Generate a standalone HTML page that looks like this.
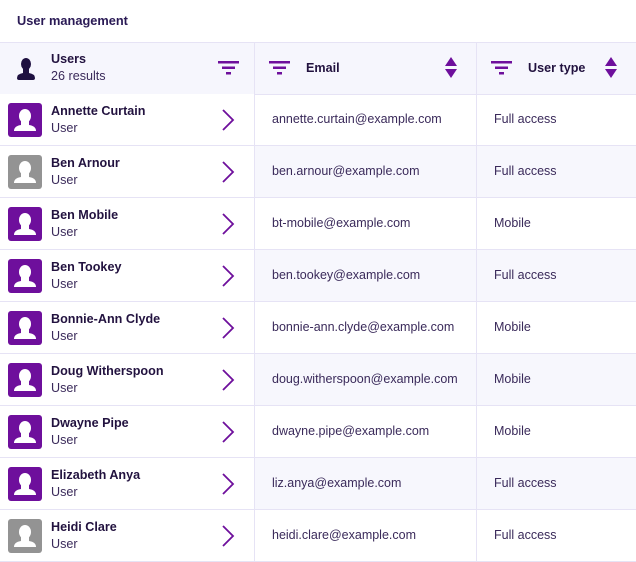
<!DOCTYPE html>
<html><head><style>
body{margin:0;width:636px;height:560px;overflow:hidden;background:#fff;font-family:"Liberation Sans",sans-serif;color:#2a1a4a}
.title{position:absolute;left:17px;top:13px;font-size:12.8px;font-weight:bold;color:#2a1a55}
.row{position:absolute;left:0;width:636px;height:51px;border-bottom:1px solid #e6e3f5}
.c1{position:absolute;left:0;top:0;width:254px;height:51px;background:#fff;border-right:1px solid #e6e3f5}
.rest{position:absolute;left:255px;top:0;width:381px;height:51px}
.alt .rest{background:#f7f7fd}
.c3b{position:absolute;left:476px;top:0;width:1px;height:51px;background:#e6e3f5}
.av{position:absolute;left:8px;top:9px;width:34px;height:34px;border-radius:3px;background:#6e0f9c}
.av.g{background:#939393}
.nm{position:absolute;left:51px;top:10px;font-size:12.6px;font-weight:bold;color:#22123f}
.sb{position:absolute;left:51px;top:27px;font-size:12.6px;color:#3a2a5a}
.chev{position:absolute;left:221px;top:15px}
.em{position:absolute;left:272px;top:18px;font-size:12.5px;color:#3a2a5a}
.ty{position:absolute;left:494px;top:18px;font-size:12.5px;color:#3a2a5a}
.hdr{position:absolute;left:0;top:42px;width:636px;height:51px;background:#f6f6fd;border-top:1px solid #e6e3f5;border-bottom:1px solid #e6e3f5}
</style></head><body>
<div class="title">User management</div>
<div class="hdr">
 <svg style="position:absolute;left:14px;top:14px" width="24" height="24" viewBox="0 0 24 24"><ellipse cx="12" cy="7" rx="5" ry="6" fill="#1e1040"/><path d="M9 11 L15 11 L15 16 Q21 17 21 21 Q21 23 19 23 L5 23 Q3 23 3 21 Q3 17 9 16Z" fill="#1e1040"/></svg>
 <div style="position:absolute;left:51px;top:9px;font-size:12.6px;font-weight:bold;color:#22123f">Users</div>
 <div style="position:absolute;left:51px;top:26px;font-size:12.6px;color:#3a2a5a">26 results</div>
 <svg style="position:absolute;left:218px;top:18px" width="22" height="14"><rect x="0" y="0" width="21" height="2.5" fill="#6e0f9c"/><rect x="4" y="5.5" width="13" height="2.5" fill="#6e0f9c"/><rect x="8" y="11" width="5" height="2.5" fill="#6e0f9c"/></svg>
 <div style="position:absolute;left:254px;top:0;width:1px;height:51px;background:#e6e3f5"></div>
 <svg style="position:absolute;left:269px;top:18px" width="22" height="14"><rect x="0" y="0" width="21" height="2.5" fill="#6e0f9c"/><rect x="4" y="5.5" width="13" height="2.5" fill="#6e0f9c"/><rect x="8" y="11" width="5" height="2.5" fill="#6e0f9c"/></svg>
 <div style="position:absolute;left:306px;top:18px;font-size:12.6px;font-weight:bold;color:#22123f">Email</div>
 <svg style="position:absolute;left:444px;top:14px" width="14" height="22"><path d="M7 0 L13 9 L1 9Z M1 12 L13 12 L7 21Z" fill="#6e0f9c"/></svg>
 <div style="position:absolute;left:476px;top:0;width:1px;height:51px;background:#e6e3f5"></div>
 <svg style="position:absolute;left:491px;top:18px" width="22" height="14"><rect x="0" y="0" width="21" height="2.5" fill="#6e0f9c"/><rect x="4" y="5.5" width="13" height="2.5" fill="#6e0f9c"/><rect x="8" y="11" width="5" height="2.5" fill="#6e0f9c"/></svg>
 <div style="position:absolute;left:528px;top:18px;font-size:12.6px;font-weight:bold;color:#22123f">User type</div>
 <svg style="position:absolute;left:604px;top:14px" width="14" height="22"><path d="M7 0 L13 9 L1 9Z M1 12 L13 12 L7 21Z" fill="#6e0f9c"/></svg>
</div>
<div id="rows"></div>
<script>
var d=[["Annette Curtain","annette.curtain@example.com","Full access",0],["Ben Arnour","ben.arnour@example.com","Full access",1],["Ben Mobile","bt-mobile@example.com","Mobile",0],["Ben Tookey","ben.tookey@example.com","Full access",0],["Bonnie-Ann Clyde","bonnie-ann.clyde@example.com","Mobile",0],["Doug Witherspoon","doug.witherspoon@example.com","Mobile",0],["Dwayne Pipe","dwayne.pipe@example.com","Mobile",0],["Elizabeth Anya","liz.anya@example.com","Full access",0],["Heidi Clare","heidi.clare@example.com","Full access",1]];
var h="";
d.forEach(function(r,i){
h+='<div class="row'+(i%2?' alt':'')+'" style="top:'+(94+i*52)+'px"><div class="rest"></div><div class="c3b"></div><div class="c1"><div class="av'+(r[3]?' g':'')+'"><svg width="34" height="34" viewBox="0 0 34 34"><ellipse cx="17" cy="13" rx="6" ry="7" fill="#fff"/><path d="M13 18 L21 18 L21 22 Q28 23 28 28 L6 28 Q6 23 13 22Z" fill="#fff"/></svg></div><div class="nm">'+r[0]+'</div><div class="sb">User</div><svg class="chev" width="14" height="22"><path d="M2 1 L12 11 L2 21" stroke="#6e0f9c" stroke-width="1.8" fill="none"/></svg></div><div class="em">'+r[1]+'</div><div class="ty">'+r[2]+'</div></div>';
});
document.getElementById("rows").innerHTML=h;
</script>
</body></html>
